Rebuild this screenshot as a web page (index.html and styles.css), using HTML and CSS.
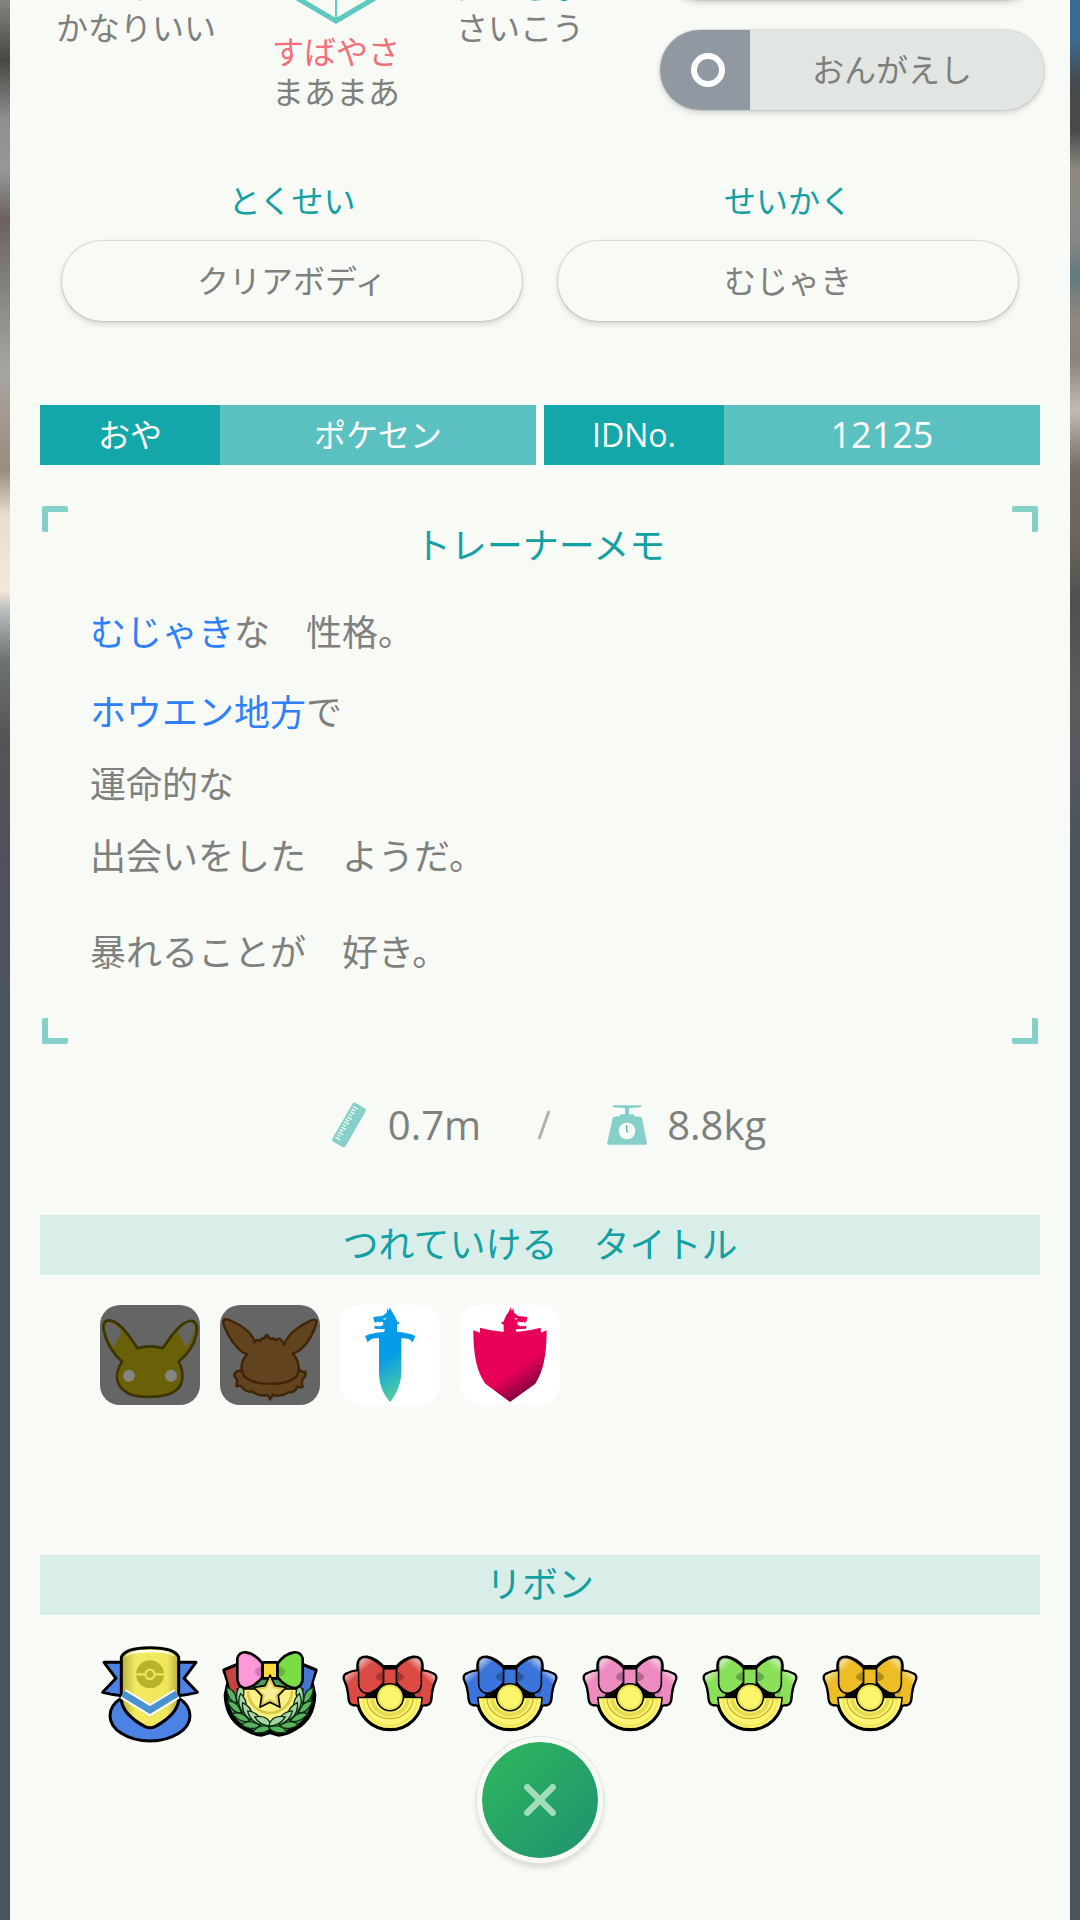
FILE: index.html
```html
<!DOCTYPE html>
<html lang="ja">
<head>
  <meta charset="UTF-8">
  <meta name="viewport" content="width=device-width, initial-scale=1">
  <title>ステータス</title>
  <link rel="stylesheet" href="styles.css">
</head>
<body>

  <!-- shared shapes -->
  <svg class="defs" aria-hidden="true">
    <defs>
      <linearGradient id="sword-fill" x1="0" y1="0" x2="0.3" y2="1">
        <stop offset="0.6" stop-color="#069ce8"/>
        <stop offset="1" stop-color="#4cc9a4"/>
      </linearGradient>
      <linearGradient id="shield-fill" x1="0.2" y1="0.1" x2="0.8" y2="1">
        <stop offset="0.55" stop-color="#e60057"/>
        <stop offset="1" stop-color="#5c0036"/>
      </linearGradient>
      <linearGradient id="gold-fill" x1="0" y1="0" x2="1" y2="0">
        <stop offset="0" stop-color="#b5ad3a"/>
        <stop offset="0.25" stop-color="#f3ea62"/>
        <stop offset="0.8" stop-color="#f0e65c"/>
        <stop offset="1" stop-color="#b5ad3a"/>
      </linearGradient>
      <linearGradient id="shine" x1="0" y1="0" x2="0.6" y2="1">
        <stop offset="0" stop-color="#fff" stop-opacity="0.8"/>
        <stop offset="0.35" stop-color="#fff" stop-opacity="0"/>
      </linearGradient>

      <path id="tail" d="M52 76 Q30 78 16 86 Q4 92 12 106 Q22 128 24 160 Q26 180 38 178 L60 182 L80 130 Z"/>
      <path id="loop" d="M52 56 Q54 32 78 34 Q104 38 130 66 L130 110 Q104 142 78 145 Q54 142 52 116 Z"/>
      <path id="half" d="M50 158 H250 A100 98 0 0 1 50 158 Z"/>
      <path id="wolf" d="M132 84 L135 73 L104 71 L103 63 L122 64 L131 58 L128 50 L114 52 L112 48 L108 54 L102 49 L100 36 L127 33 L140 23 L142 10 L147 18 L149 6 L156 20 L164 32 L172 50 L180 53 L171 60 L171 84 Z"/>

      <g id="bow" transform="translate(6 6) scale(0.96)">
        <g stroke="#000" stroke-width="15" stroke-linejoin="round">
          <use href="#tail"/>
          <use href="#loop"/>
          <use href="#tail" transform="translate(300 0) scale(-1 1)"/>
          <use href="#loop" transform="translate(300 0) scale(-1 1)"/>
          <rect x="130" y="64" width="40" height="60"/>
          <use href="#half"/>
        </g>
        <g fill="currentColor">
          <use href="#tail"/>
          <use href="#tail" transform="translate(300 0) scale(-1 1)"/>
        </g>
        <g fill="url(#shine)">
          <use href="#tail"/>
          <use href="#tail" transform="translate(300 0) scale(-1 1)"/>
        </g>
        <path fill="#000" opacity="0.18" d="M52 90 L66 155 H234 L248 90 V140 L230 160 H70 Z"/>
        <path d="M80 150 Q115 140 130 112 H170 Q185 140 220 150 L190 162 H110 Z"/>
        <g fill="currentColor" stroke="#000" stroke-width="5">
          <use href="#loop"/>
          <use href="#loop" transform="translate(300 0) scale(-1 1)"/>
          <rect x="130" y="68" width="40" height="54"/>
        </g>
        <g fill="url(#shine)">
          <use href="#loop"/>
          <use href="#loop" transform="translate(300 0) scale(-1 1)"/>
        </g>
        <path fill="#000" opacity="0.25" d="M127 78 Q108 82 106 94 Q108 104 127 108 Z M173 78 Q192 82 194 94 Q192 104 173 108 Z"/>
        <use href="#half" fill="#fbf372" stroke="#000" stroke-width="5"/>
        <path d="M66 162 A84 84 0 0 0 234 162" fill="none" stroke="#efe35b" stroke-width="5"/>
        <path d="M78 160 A72 64 0 0 0 222 160" fill="none" stroke="#c2b32f" stroke-width="4"/>
        <path d="M94 160 A56 52 0 0 0 206 160" fill="none" stroke="#e8da50" stroke-width="12"/>
        <circle cx="150" cy="157" r="42" fill="#fbf66c" stroke="#000" stroke-width="5"/>
        <circle cx="150" cy="157" r="36" fill="none" stroke="#e3d84e" stroke-width="4"/>
      </g>

      <g id="leaves" stroke="#0d2a12" stroke-width="4" stroke-linejoin="round">
        <path fill="#5bb560" d="M160 246 Q146 270 106 264 Q120 236 160 246 Z"/>
        <path fill="#a3d8a4" d="M160 243 Q148 208 108 218 Q124 244 160 243 Z"/>
      </g>
      <g id="branch">
        <use href="#leaves" transform="rotate(76 150 140)"/>
        <use href="#leaves" transform="rotate(58 150 140)"/>
        <use href="#leaves" transform="rotate(40 150 140)"/>
        <use href="#leaves" transform="rotate(21 150 140)"/>
        <use href="#leaves" transform="rotate(3 150 140)"/>
      </g>
    </defs>
  </svg>

  <main class="panel">

    <section class="summary">
      <div class="stat">
        <span class="stat-down">とくぼう</span>
        <span>かなりいい</span>
      </div>
      <div class="stat stat-center">
        <svg class="hexagon" viewBox="0 0 160 100" aria-hidden="true">
          <path d="M2 0 V51 L80 97 L158 51 V0" fill="none" stroke="#5fc9bf" stroke-width="5"/>
          <path d="M80 0 V95" stroke="#5fc9bf" stroke-width="2"/>
        </svg>
        <span class="stat-speed">すばやさ</span>
        <span>まあまあ</span>
      </div>
      <div class="stat">
        <span class="stat-label">ぼうぎょ</span>
        <span>さいこう</span>
      </div>

      <ul class="moves">
        <li class="move"><span class="move-type"></span><span class="move-name"></span></li>
        <li class="move">
          <span class="move-type">
            <svg viewBox="0 0 34 34" aria-hidden="true"><circle cx="17" cy="17" r="14" fill="none" stroke="#fff" stroke-width="6"/></svg>
          </span>
          <span class="move-name">おんがえし</span>
        </li>
      </ul>
    </section>

    <section class="traits">
      <div>
        <h2>とくせい</h2>
        <p class="pill">クリアボディ</p>
      </div>
      <div>
        <h2>せいかく</h2>
        <p class="pill">むじゃき</p>
      </div>
    </section>

    <dl class="owner">
      <div class="owner-item">
        <dt>おや</dt>
        <dd>ポケセン</dd>
      </div>
      <div class="owner-item">
        <dt>IDNo.</dt>
        <dd class="id-number">12125</dd>
      </div>
    </dl>

    <section class="memo">
      <span class="corner top-left"></span>
      <span class="corner top-right"></span>
      <span class="corner bottom-left"></span>
      <span class="corner bottom-right"></span>
      <h2>トレーナーメモ</h2>
      <p><em>むじゃき</em>な　性格。</p>
      <p><em>ホウエン地方</em>で<br>運命的な<br>出会いをした　ようだ。</p>
      <p class="memo-last">暴れることが　好き。</p>
    </section>

    <div class="size">
      <svg class="ruler" viewBox="0 0 114 146" aria-hidden="true">
        <g transform="rotate(30 57 73)">
          <rect x="34" y="5" width="46" height="136" rx="7" fill="#86d0ca"/>
          <path d="M40 18h16M40 27h11M40 36h16M40 45h11M40 54h16M40 63h11M40 72h16M40 81h11M40 90h16M40 99h11M40 108h16M40 117h11M40 126h16" stroke="#f8faf5" stroke-width="4"/>
        </g>
      </svg>
      <span class="size-value">0.7m</span>
      <svg class="slash" viewBox="0 0 14 30" aria-hidden="true"><path d="M12 1 L2 29" stroke="#b0b2ae" stroke-width="3"/></svg>
      <svg class="scale" viewBox="0 0 120 120" aria-hidden="true">
        <path fill="#86d0ca" d="M17 1 H103 Q104 7 98 7 L66 10 V28 H78 Q82 28 82 34 L100 35 Q104 36 105 40 L120 116 Q120 119 117 119 H3 Q0 119 0 116 L17 40 Q18 36 22 35 L38 34 Q38 28 42 28 H54 V10 L22 7 Q16 7 17 1 Z"/>
        <circle cx="60" cy="78" r="25" fill="#f8faf5"/>
        <path d="M59 60 V78 L63 82" fill="none" stroke="#63aaa5" stroke-width="4"/>
      </svg>
      <span class="size-value">8.8kg</span>
    </div>

    <section>
      <h2 class="heading">つれていける　タイトル</h2>
      <ul class="icons titles">
        <li class="title disabled">
          <svg viewBox="0 0 300 300" role="img" aria-label="ピカチュウ">
            <path fill="#6a6008" stroke="#3b3500" stroke-width="8" stroke-linejoin="round" d="M112 130 Q150 118 188 130 C212 96 240 52 270 48 C290 46 294 66 288 92 C282 120 262 148 236 170 C254 206 250 238 228 256 C200 282 100 282 74 258 C46 238 44 206 66 170 C36 144 18 108 11 76 C6 48 20 42 40 49 C66 60 90 96 112 130 Z"/>
            <path fill="#656565" d="M66 84 C54 64 38 52 26 52 C14 54 14 70 18 82 C22 98 32 116 42 128 Q48 106 66 84 Z M232 84 C246 64 260 53 272 52 C286 54 286 70 282 82 C278 98 268 114 258 126 Q250 104 232 84 Z"/>
            <circle cx="87" cy="212" r="18" fill="#858585"/>
            <circle cx="213" cy="212" r="18" fill="#858585"/>
          </svg>
        </li>
        <li class="title disabled">
          <svg viewBox="0 0 300 300" role="img" aria-label="イーブイ">
            <g fill="#62431f" stroke="#402405" stroke-width="7" stroke-linejoin="round">
              <path d="M68 198 Q44 194 43 212 Q46 220 52 224 Q48 236 50 244 Q60 240 66 246 Q76 262 98 260 Q118 276 142 270 Q148 274 150 284 Q156 276 158 270 Q186 276 204 262 Q226 264 232 244 Q240 250 248 246 Q244 234 248 222 Q260 212 256 200 Q244 204 236 192 Z"/>
              <path d="M82 148 C54 142 20 90 10 54 C8 40 20 40 34 48 C70 64 98 86 104 112 Q110 100 120 108 Q124 98 134 100 Q136 90 142 90 Q146 100 154 102 Q160 96 166 106 Q178 96 184 106 Q192 112 192 120 C202 88 240 60 274 46 C292 40 292 48 286 64 C274 100 250 136 218 146 C240 168 240 200 228 216 C196 244 106 244 72 214 C60 190 64 166 82 148 Z"/>
            </g>
          </svg>
        </li>
        <li class="title">
          <svg viewBox="0 0 300 300" role="img" aria-label="ソード">
            <path fill="url(#sword-fill)" d="M75 93 Q102 82 132 81 L135 73 L104 71 L103 63 L122 64 L131 58 L128 50 L114 52 L112 48 L108 54 L102 49 L100 36 L127 33 L140 23 L142 10 L147 18 L149 6 L156 20 L164 32 L172 50 L180 53 L171 60 L171 81 Q202 82 226 93 L218 112 L208 103 Q198 99 184 100 V205 C182 245 165 275 150 291 C133 272 118 245 117 205 V100 Q102 98 93 103 L83 112 Z"/>
            <path fill="#fff" d="M127 42 l12 -4 l-3 6 z"/>
          </svg>
        </li>
        <li class="title">
          <svg viewBox="0 0 300 300" role="img" aria-label="シールド">
            <use href="#wolf" fill="#e60057" transform="translate(302 0) scale(-1 1)"/>
            <path fill="url(#shield-fill)" d="M40 76 L60 83 L60 68 Q94 78 127 80 H175 Q208 78 242 68 L243 83 L260 76 C260 150 250 200 226 236 L150 291 L76 236 C50 200 40 150 40 76 Z"/>
            <path fill="#fff" d="M175 42 l-12 -4 l3 6 z"/>
          </svg>
        </li>
      </ul>
    </section>

    <section>
      <h2 class="heading">リボン</h2>
      <ul class="icons ribbons">
        <li>
          <svg viewBox="0 0 300 300" aria-hidden="true">
            <g stroke="#000" stroke-width="9" stroke-linejoin="round">
              <ellipse cx="150" cy="212" rx="120" ry="76" fill="#4b82e4"/>
              <path fill="#4b82e4" d="M66 52 L12 52 L48 100 L8 142 Q40 150 66 152 Z M234 52 L288 52 L252 100 L292 142 Q260 150 234 152 Z"/>
              <path fill="url(#gold-fill)" d="M64 36 Q76 8 150 8 Q224 8 236 36 V165 Q232 208 165 245 Q150 252 135 245 Q68 208 64 165 Z"/>
            </g>
            <path d="M72 40 Q84 22 150 22 Q216 22 228 40 Q216 14 150 14 Q84 14 72 40 Z" fill="#fff"/>
            <path d="M69 146 L150 196 L231 146" fill="none" stroke="#fff" stroke-width="32"/>
            <path d="M69 146 L150 195 L231 146" fill="none" stroke="#4892cf" stroke-width="20"/>
            <circle cx="150" cy="88" r="42" fill="#b9b22b"/>
            <path d="M106 88 H194" stroke="#eee45c" stroke-width="7"/>
            <circle cx="150" cy="88" r="14" fill="#b9b22b" stroke="#eee45c" stroke-width="7"/>
          </svg>
        </li>
        <li>
          <svg viewBox="0 0 300 300" aria-hidden="true">
            <path fill="#4c9a55" stroke="#000" stroke-width="14" stroke-linejoin="round" d="M54 60 L14 76 L26 112 L18 150 Q20 220 74 250 Q100 266 125 268 L150 260 L175 268 Q200 266 226 250 Q280 220 282 150 L274 112 L286 76 L246 60 Z"/>
            <path fill="#c64340" d="M54 62 L16 78 L30 130 L58 160 Z"/>
            <path fill="#4377d3" d="M246 62 L284 78 L270 130 L242 160 Z"/>
            <path fill="#fbf084" stroke="#000" stroke-width="5" d="M52 132 H248 A98 104 0 0 1 52 132 Z"/>
            <path fill="none" stroke="#d9c74b" stroke-width="8" d="M84 138 A66 66 0 0 0 216 138"/>
            <use href="#branch"/>
            <use href="#branch" transform="translate(300 0) scale(-1 1)"/>
            <g stroke="#000" stroke-width="8" stroke-linejoin="round">
              <path fill="#fe98d8" d="M52 40 Q58 20 78 22 Q106 26 128 56 V96 Q104 126 74 130 Q52 124 52 100 Z"/>
              <path fill="#7add46" d="M248 40 Q242 20 222 22 Q194 26 172 56 V96 Q196 126 226 130 Q248 124 248 100 Z"/>
              <path fill="#fbdc3c" d="M128 52 H172 V100 H128 Z"/>
            </g>
            <path fill="#000" opacity="0.18" d="M124 64 Q106 70 104 80 Q106 92 124 96 Z M176 64 Q194 70 196 80 Q194 92 176 96 Z"/>
            <path fill="#e3cf57" stroke="#000" stroke-width="5" stroke-linejoin="round" d="M150 90 L165 122 L199 127 L175 152 L180 187 L150 172 L120 187 L125 152 L101 127 L135 122 Z"/>
            <path fill="#f8ee96" d="M150 108 L159 130 L182 134 L165 150 L169 172 L150 161 L131 172 L135 150 L118 134 L141 130 Z"/>
          </svg>
        </li>
        <li class="red"><svg viewBox="0 0 300 300" aria-hidden="true"><use href="#bow"/></svg></li>
        <li class="blue"><svg viewBox="0 0 300 300" aria-hidden="true"><use href="#bow"/></svg></li>
        <li class="pink"><svg viewBox="0 0 300 300" aria-hidden="true"><use href="#bow"/></svg></li>
        <li class="green"><svg viewBox="0 0 300 300" aria-hidden="true"><use href="#bow"/></svg></li>
        <li class="yellow"><svg viewBox="0 0 300 300" aria-hidden="true"><use href="#bow"/></svg></li>
      </ul>
    </section>

  </main>

  <button class="close-btn" type="button" aria-label="とじる">
    <svg viewBox="0 0 32 32" aria-hidden="true"><path d="M4 4 L28 28 M28 4 L4 28" stroke="#a3dcb8" stroke-width="6" stroke-linecap="round"/></svg>
  </button>

</body>
</html>
```
FILE: styles.css
```css
* {
  box-sizing: border-box;
  margin: 0;
  padding: 0;
}

body {
  font-family: "Open Sans", "Noto Sans CJK JP", sans-serif;
  font-size: 32px;
  line-height: 40px;
  color: #7e807e;
  background-color: #4b545e;
  background-image:
    linear-gradient(#858580, #4a4642 60px, #8f8f8f 120px, #979797 170px, #6b625f 220px, #8a8884 300px, #a8a5a0 370px, #9a8c80 470px, #e8ddd0 515px, #f5e8d8 590px, #b5babc 612px, #6d7272 660px, #555558 735px, #50505c 857px, #4b545e 1000px),
    linear-gradient(#3b6a91, #3b6a91 40px, #454b50 80px, #4a4a48 130px, #8e8984 170px, #888684 240px, #617980 275px, #93867d 320px, #8b837b 360px, #c2bbb0 410px, #756a5f 470px, #6b655c 540px, #4e504e 600px, #5c5c5e 700px, #4b545e 850px);
  background-position: left top, right top;
  background-size: 50% 100%;
  background-repeat: no-repeat;
}

ul {
  list-style: none;
}

svg {
  display: block;
}

h2 {
  font-size: 36px;
  font-weight: 400;
  color: #12a0a2;
  text-align: center;
}

.defs {
  position: absolute;
  width: 0;
  height: 0;
}

.panel {
  min-height: 100vh;
  margin: 0 10px;
  padding: 0 30px;
  background-color: #f8faf5;
  overflow: hidden;
}

/* stats and moves */
.summary {
  display: flex;
  align-items: flex-end;
  gap: 40px;
  height: 112px;
  padding-left: 16px;
}

.stat {
  display: flex;
  flex-direction: column;
  align-items: center;
  padding-bottom: 64px;
  white-space: nowrap;
}

.stat-center {
  width: 160px;
  padding-bottom: 0;
}

.stat-down,
.stat-label {
  margin-bottom: 2px;
}

.stat-down {
  color: #5a9be0;
}

.stat-speed {
  color: #f2707a;
}

.stat-label {
  color: #12a0a2;
}

.hexagon {
  width: 160px;
  height: 100px;
  margin-bottom: 8px;
}

.moves {
  width: 384px;
  margin-left: auto;
  margin-right: -4px;
  padding-bottom: 2px;
}

.move {
  display: flex;
  height: 80px;
  border-radius: 40px;
  background-color: #e2e6e2;
  box-shadow: 0 0 1px 1px rgba(0, 0, 0, 0.1), 0 3px 6px rgba(0, 0, 0, 0.15);
  overflow: hidden;
}

.move + .move {
  margin-top: 30px;
}

.move-type {
  display: flex;
  align-items: center;
  justify-content: center;
  width: 90px;
  padding-left: 6px;
  background-color: #9098a2;
}

.move-type svg {
  width: 34px;
  height: 34px;
}

.move-name {
  flex: 1;
  line-height: 80px;
  text-align: center;
  padding-right: 10px;
}

/* ability and nature */
.traits {
  display: grid;
  grid-template-columns: 1fr 1fr;
  gap: 36px;
  padding: 69px 22px 0;
}

.traits h2 {
  font-size: 32px;
}

.pill {
  height: 80px;
  margin-top: 20px;
  border-radius: 40px;
  line-height: 80px;
  text-align: center;
  box-shadow: 0 0 1px 1px rgba(0, 0, 0, 0.12), 0 3px 6px rgba(0, 0, 0, 0.15);
}

/* original trainer */
.owner {
  display: flex;
  gap: 8px;
  margin-top: 84px;
  line-height: 60px;
  text-align: center;
  color: #fff;
}

.owner-item {
  display: flex;
  flex: 1;
}

.owner-item dt {
  width: 180px;
  background-color: #13a7a9;
}

.owner-item dd {
  flex: 1;
  background-color: #5bc1c0;
}

.owner-item .id-number {
  font-size: 36px;
}

/* memo */
.memo {
  position: relative;
  margin: 41px 2px 0;
  padding: 20px 48px 55px;
}

.memo h2 {
  margin-bottom: 31px;
}

.memo p {
  font-size: 36px;
  line-height: 72px;
  margin-bottom: 8px;
}

.memo em {
  font-style: normal;
  color: #2f80f8;
}

.memo .memo-last {
  margin: 24px 0 0;
}

.corner {
  position: absolute;
  width: 26px;
  height: 26px;
  border: 0 solid #86d0ca;
  border-radius: 2px;
}

.top-left {
  top: 0;
  left: 0;
  border-width: 6px 0 0 6px;
}

.top-right {
  top: 0;
  right: 0;
  border-width: 6px 6px 0 0;
}

.bottom-left {
  bottom: 0;
  left: 0;
  border-width: 0 0 6px 6px;
}

.bottom-right {
  right: 0;
  bottom: 0;
  border-width: 0 6px 6px 0;
}

/* height and weight */
.size {
  display: flex;
  align-items: center;
  justify-content: center;
  height: 60px;
  margin-top: 51px;
  padding-left: 16px;
}

.size-value {
  margin-left: 20px;
  font-size: 40px;
}

.ruler {
  width: 38px;
  height: 48px;
}

.slash {
  width: 14px;
  height: 30px;
  margin: 0 56px;
}

.scale {
  width: 40px;
  height: 40px;
}

/* titles and ribbons */
.heading {
  margin-top: 60px;
  line-height: 60px;
  background-color: #daeee9;
}

.icons {
  display: flex;
  flex-wrap: wrap;
  gap: 20px;
  padding: 30px 60px 0;
}

.icons svg {
  width: 100px;
  height: 100px;
}

.titles {
  padding-bottom: 90px;
}

.title {
  border-radius: 20px;
  background-color: #fff;
  overflow: hidden;
}

.disabled {
  background-color: #656565;
}

.red {
  color: #dc4a44;
}

.blue {
  color: #3b74da;
}

.pink {
  color: #ee8bc0;
}

.green {
  color: #8be05a;
}

.yellow {
  color: #ecbd25;
}

.close-btn {
  position: fixed;
  bottom: 57px;
  left: 50%;
  display: flex;
  align-items: center;
  justify-content: center;
  width: 126px;
  height: 126px;
  margin-left: -63px;
  border: 5px solid #f8faf5;
  border-radius: 50%;
  background: linear-gradient(135deg, #2bb060 20%, #20956f 90%) padding-box;
  box-shadow: 0 0 0 1px #e2e2e0, 0 4px 6px rgba(0, 0, 0, 0.15);
  cursor: pointer;
}

.close-btn svg {
  width: 34px;
  height: 34px;
}
```
